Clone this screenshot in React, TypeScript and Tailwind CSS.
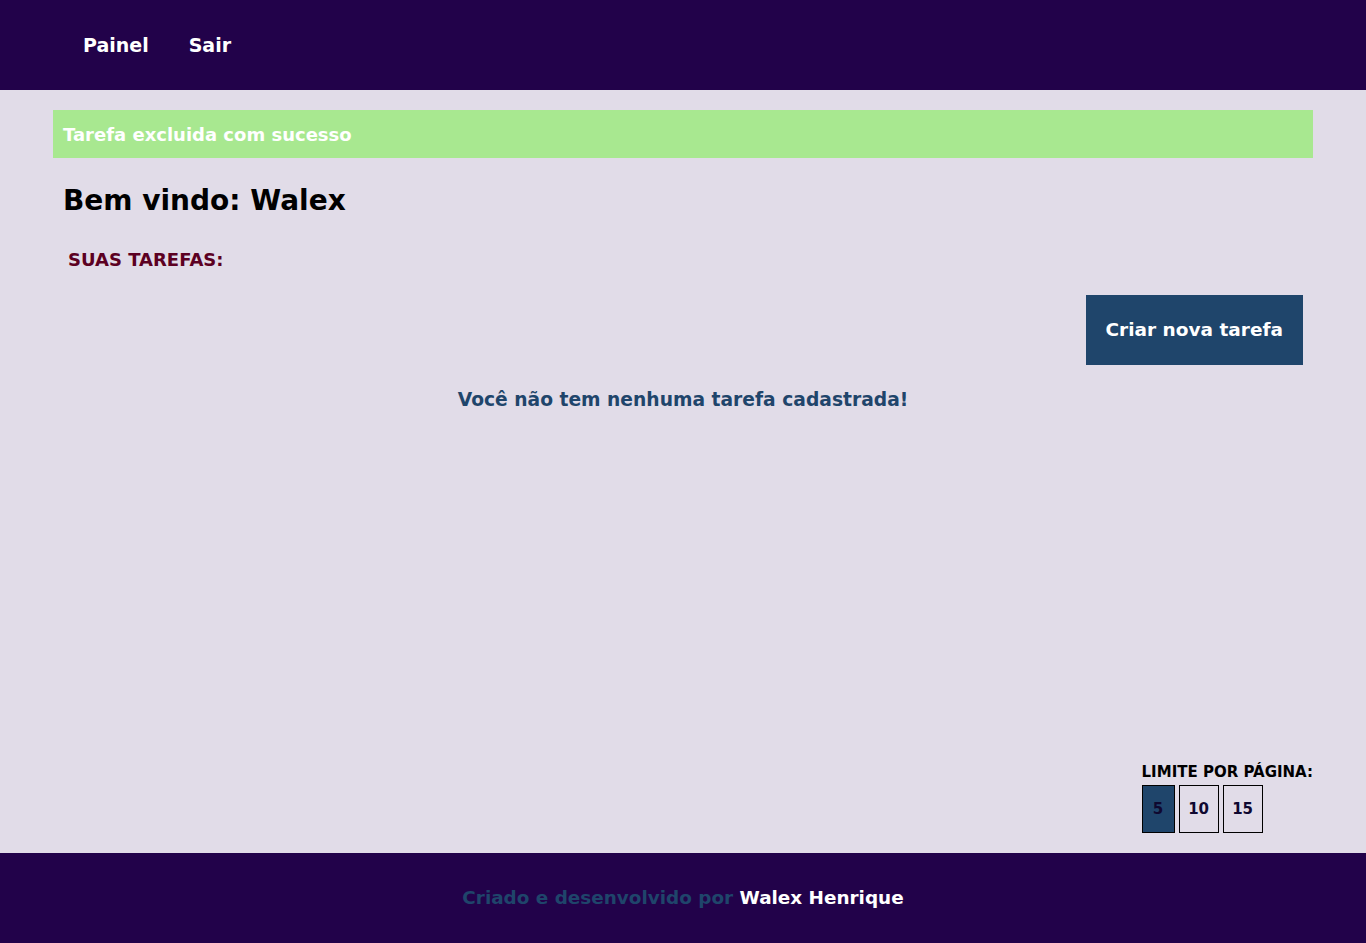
import React from "react";

const font = { fontFamily: "'DejaVu Sans', Inter, sans-serif" };

const limitWidth: Record<number, string> = {
  5: "w-[33px]",
  10: "w-[40px]",
  15: "w-[40px]",
};

export default function App() {
  const limits = [5, 10, 15];
  const current = 5;

  return (
    <div className="flex min-h-screen flex-col bg-[#e1dce8]" style={font}>
      <header className="flex h-[90px] items-center gap-10 bg-[#22024a] px-[83px]">
        <a className="text-[19px] font-bold text-white">Painel</a>
        <a className="text-[19px] font-bold text-white">Sair</a>
      </header>

      <main className="mx-[53px] flex flex-1 flex-col pb-5 pt-5">
        <div className="flex h-12 items-center bg-[#a8e890] px-2.5 text-[18px] font-bold text-white">
          Tarefa excluida com sucesso
        </div>

        <h1 className="mt-[22px] px-2.5 text-[28px] leading-[42px] font-bold text-black">Bem vindo: Walex</h1>

        <h2 className="mt-6 px-[15px] text-[18px] leading-[27px] font-bold text-[#5c0022]">SUAS TAREFAS:</h2>

        <div className="mt-[22px] flex justify-end px-2.5">
          <button className="h-[70px] bg-[#1f456b] px-5 text-[18.5px] font-bold text-white">
            Criar nova tarefa
          </button>
        </div>

        <p className="mt-[21px] text-center text-[18.7px] leading-[28px] font-bold text-[#1f456b]">
          Você não tem nenhuma tarefa cadastrada!
        </p>

        <div className="mt-auto flex justify-end">
          <div className="flex flex-col gap-0.5">
            <span className="text-[15px] font-bold text-black">LIMITE POR PÁGINA:</span>
            <div className="flex gap-1">
              {limits.map((n) => (
                <button
                  key={n}
                  className={`h-12 border border-black text-[15px] font-bold text-[#0f0830] ${limitWidth[n]} ${
                    n === current ? "bg-[#1f456b]" : "bg-transparent"
                  }`}
                >
                  {n}
                </button>
              ))}
            </div>
          </div>
        </div>
      </main>

      <footer className="flex h-[90px] items-center justify-center bg-[#22024a] text-[18.4px] font-bold">
        <span className="text-[#1f456b]">Criado e desenvolvido por&nbsp;</span>
        <span className="text-white">Walex Henrique</span>
      </footer>
    </div>
  );
}
